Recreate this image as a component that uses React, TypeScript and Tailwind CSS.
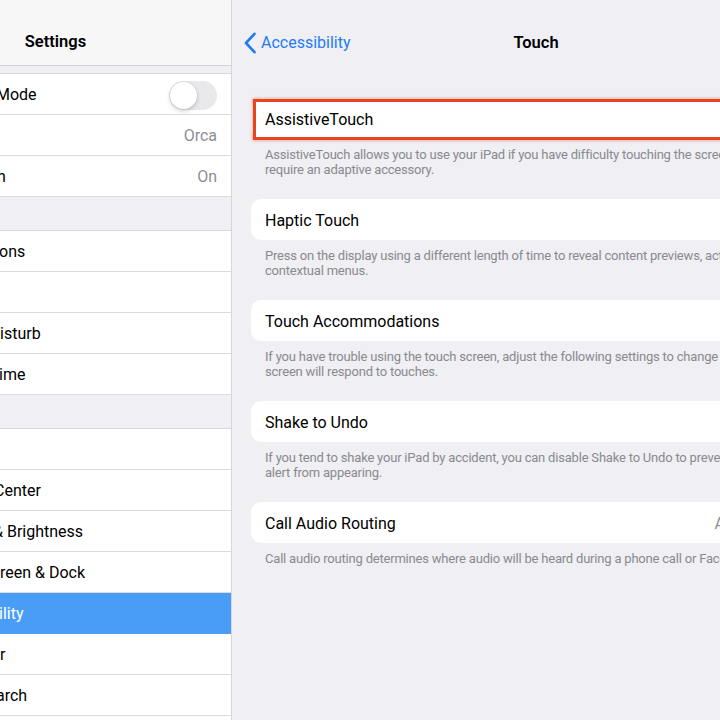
import { ChevronRight } from 'lucide-react';

type Row = { label: string; value?: string; toggle?: boolean; selected?: boolean; shift?: number };

const GROUPS: Row[][] = [
  [
    { label: 'Mode', toggle: true, shift: 4 },
    { label: '', value: 'Orca' },
    { label: 'h', value: 'On', shift: 3 },
  ],
  [
    { label: 'ons', shift: 1 },
    { label: '' },
    { label: 'isturb', shift: 0 },
    { label: 'ime', shift: 1 },
  ],
  [
    { label: '' },
    { label: 'Center', shift: 6 },
    { label: '& Brightness', shift: 7 },
    { label: 'reen & Dock' },
    { label: 'ility', selected: true, shift: 1 },
    { label: 'r' },
    { label: 'arch', shift: 4 },
    { label: '' },
  ],
];

const SECTIONS = [
  {
    title: 'AssistiveTouch',
    highlight: true,
    footer: [
      'AssistiveTouch allows you to use your iPad if you have difficulty touching the screen or if you',
      'require an adaptive accessory.',
    ],
  },
  {
    title: 'Haptic Touch',
    footer: [
      'Press on the display using a different length of time to reveal content previews, actions and',
      'contextual menus.',
    ],
  },
  {
    title: 'Touch Accommodations',
    footer: [
      'If you have trouble using the touch screen, adjust the following settings to change how the',
      'screen will respond to touches.',
    ],
  },
  {
    title: 'Shake to Undo',
    footer: [
      'If you tend to shake your iPad by accident, you can disable Shake to Undo to prevent the Undo',
      'alert from appearing.',
    ],
  },
  {
    title: 'Call Audio Routing',
    value: 'Automatic',
    footer: ['Call audio routing determines where audio will be heard during a phone call or FaceTime audio.'],
  },
];

function Toggle() {
  return (
    <div className="w-[48px] h-[29px] rounded-full bg-[#e9e9eb] p-[1px] flex items-center">
      <div className="w-[27px] h-[27px] rounded-full bg-white shadow-[0_2px_4px_rgba(0,0,0,0.18),0_0_0_0.5px_rgba(0,0,0,0.06)]" />
    </div>
  );
}

function BackChevron() {
  return (
    <svg width="13" height="22" viewBox="0 0 13 22" fill="none" className="mr-[4px]">
      <path d="M10.5 1.8 L2 11 L10.5 20.2" stroke="currentColor" strokeWidth="2.6" strokeLinecap="round" strokeLinejoin="round" />
    </svg>
  );
}

function Sidebar() {
  return (
    <aside className="w-[232px] shrink-0 h-[720px] overflow-hidden bg-[#efeff4] border-r border-[#d6d6da]">
      <div className="h-[66px] pt-[20px] bg-[#f7f7f8] border-b border-[#d4d4d8] flex items-center">
        <h1 className="w-[111px] text-center text-[16.5px] font-semibold text-black">Settings</h1>
      </div>
      <div className="pt-[7px]">
        {GROUPS.map((group, gi) => (
          <div key={gi} className={cn('border-t border-[#d8d8dc]', gi > 0 && 'mt-[33px]')}>
            {group.map((row, ri) => (
              <div
                key={ri}
                className={cn(
                  'h-[41px] pt-[2px] flex items-center pr-[14px] border-b',
                  row.selected ? 'bg-[#4a9df6] border-[#4a9df6] text-white' : 'bg-white border-[#dcdce0] text-black'
                )}
              >
                <span className="text-[16px] whitespace-nowrap" style={{ marginLeft: -(row.shift ?? 0) }}>
                  {row.label}
                </span>
                <div className="ml-auto flex items-center">
                  {row.value && <span className="text-[16px] text-[#8e8e93]">{row.value}</span>}
                  {row.toggle && <Toggle />}
                </div>
              </div>
            ))}
          </div>
        ))}
      </div>
    </aside>
  );
}

function Detail() {
  return (
    <main className="w-[608px] shrink-0 h-[720px] bg-[#efeff4]">
      <div className="h-[66px] pt-[20px] px-[12px] relative flex items-center">
        <div className="flex items-center text-[#1f7cf4]">
          <BackChevron />
          <span className="text-[16px]">Accessibility</span>
        </div>
        <h2 className="absolute left-0 right-0 top-[20px] h-[46px] flex items-center justify-center text-[16.5px] font-semibold text-black pointer-events-none">
          Touch
        </h2>
      </div>
      <div className="pt-[32px] px-[19px]">
        {SECTIONS.map(s => (
          <section key={s.title}>
            <div className="relative h-[41px] pt-[3px] rounded-[10px] bg-white flex items-center px-[14px]">
              <span className="text-[16px] text-black">{s.title}</span>
              <div className="ml-auto flex items-center gap-[1px] text-[#8e8e93]">
                {s.value && <span className="text-[16px]">{s.value}</span>}
                <ChevronRight size={18} className="text-[#c4c4c7]" />
              </div>
              {s.highlight && (
                <div className="absolute left-[2px] -right-[2px] top-[1px] -bottom-[1px] border-[3px] border-[#e6451f] shadow-[0_0_3px_rgba(229,66,30,0.7)] pointer-events-none" />
              )}
            </div>
            <div className="pt-[8px] px-[14px] h-[60px] text-[13px] leading-[15px] tracking-[-0.2px] text-[#8a8a8e]">
              {s.footer.map(line => (
                <div key={line} className="whitespace-nowrap">{line}</div>
              ))}
            </div>
          </section>
        ))}
      </div>
    </main>
  );
}

export default function App() {
  return (
    <div className="w-[720px] h-[720px] overflow-hidden font-['Roboto','Liberation_Sans',sans-serif]">
      <div className="flex w-[840px]">
        <Sidebar />
        <Detail />
      </div>
    </div>
  );
}

function cn(...classes: (string | boolean | undefined)[]) {
  return classes.filter(Boolean).join(' ');
}
